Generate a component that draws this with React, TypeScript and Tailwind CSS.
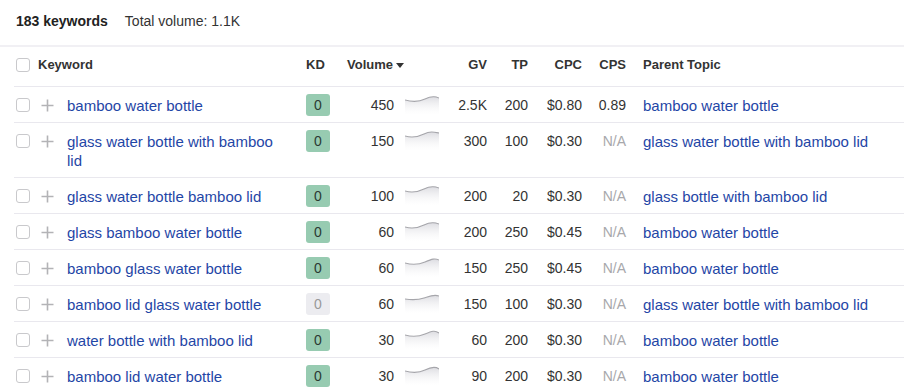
import React from 'react';

type Row = {
  keyword: string;
  kd: number;
  kdGray?: boolean;
  volume: string;
  gv: string;
  tp: string;
  cpc: string;
  cps: string;
  parent: string;
  spark: string;
};

const rows: Row[] = [
  { keyword: 'bamboo water bottle', kd: 0, volume: '450', gv: '2.5K', tp: '200', cpc: '$0.80', cps: '0.89', parent: 'bamboo water bottle', spark: 'M0 6 C7 8 14 8 20 5 S30 2 34 4' },
  { keyword: 'glass water bottle with bamboo lid', kd: 0, volume: '150', gv: '300', tp: '100', cpc: '$0.30', cps: 'N/A', parent: 'glass water bottle with bamboo lid', spark: 'M0 6 C7 8 13 7 19 4 S29 2 34 3' },
  { keyword: 'glass water bottle bamboo lid', kd: 0, volume: '100', gv: '200', tp: '20', cpc: '$0.30', cps: 'N/A', parent: 'glass bottle with bamboo lid', spark: 'M0 6 C7 8 13 7 19 4 S29 1 34 3' },
  { keyword: 'glass bamboo water bottle', kd: 0, volume: '60', gv: '200', tp: '250', cpc: '$0.45', cps: 'N/A', parent: 'bamboo water bottle', spark: 'M0 6 C7 8 13 7 19 4 S29 1 34 3' },
  { keyword: 'bamboo glass water bottle', kd: 0, volume: '60', gv: '150', tp: '250', cpc: '$0.45', cps: 'N/A', parent: 'bamboo water bottle', spark: 'M0 6 C7 8 13 8 20 5 S30 1 34 3' },
  { keyword: 'bamboo lid glass water bottle', kd: 0, kdGray: true, volume: '60', gv: '150', tp: '100', cpc: '$0.30', cps: 'N/A', parent: 'glass water bottle with bamboo lid', spark: 'M0 6 C7 7 13 7 19 5 S29 1 34 3' },
  { keyword: 'water bottle with bamboo lid', kd: 0, volume: '30', gv: '60', tp: '200', cpc: '$0.30', cps: 'N/A', parent: 'bamboo water bottle', spark: 'M0 6 C7 8 13 8 20 5 S30 1 34 4' },
  { keyword: 'bamboo lid water bottle', kd: 0, volume: '30', gv: '90', tp: '200', cpc: '$0.30', cps: 'N/A', parent: 'bamboo water bottle', spark: 'M0 6 C7 8 14 8 20 5 S30 1 34 4' },
];

const font = { fontFamily: '"Liberation Sans", Arial, sans-serif' };

const Checkbox = () => (
  <div className="w-[14px] h-[14px] rounded-[3px] border border-[#c9c9cc] bg-white shrink-0" />
);

const Sparkline: React.FC<{ d: string; id: number }> = ({ d, id }) => (
  <svg width="34" height="21" viewBox="0 0 34 21" className="block">
    <defs>
      <linearGradient id={`sg${id}`} x1="0" y1="0" x2="0" y2="1">
        <stop offset="0" stopColor="#dcdce1" stopOpacity="1" />
        <stop offset="1" stopColor="#ffffff" stopOpacity="0.2" />
      </linearGradient>
    </defs>
    <path d={`${d} L34 21 L0 21 Z`} fill={`url(#sg${id})`} transform="translate(0 1)" />
    <path d={d} fill="none" stroke="#a6a6ab" strokeWidth="1.1" transform="translate(0 1)" />
  </svg>
);

export default function App() {
  return (
    <div className="w-[904px] h-[392px] overflow-hidden bg-white text-[#333]" style={font}>
      {/* Summary */}
      <div className="h-[45px] flex items-center gap-[17px] pl-4 pb-[3px] text-[14px]">
        <span className="font-bold text-[#222]">183 keywords</span>
        <span className="text-[#333]">Total volume: 1.1K</span>
      </div>
      <div className="h-[2px] bg-[#f1f0f4]" />

      {/* Header */}
      <div className="ml-[14px] h-[40px] pb-[3px] border-b border-[#e9e8ee] flex items-center text-[13px] font-bold text-[#333]">
        <div className="pl-[2px] flex items-center">
          <Checkbox />
        </div>
        <div className="w-[8px]" />
        <div className="w-[268px]">Keyword</div>
        <div className="w-[41px]">KD</div>
        <div className="w-[92px] flex items-center gap-[3px]">
          Volume
          <svg width="8" height="5" viewBox="0 0 8 5"><path d="M0 0 H8 L4 5 Z" fill="#333" /></svg>
        </div>
        <div className="w-[48px] text-right">GV</div>
        <div className="w-[41px] text-right">TP</div>
        <div className="w-[54px] text-right">CPC</div>
        <div className="w-[44px] text-right">CPS</div>
        <div className="pl-[17px]">Parent Topic</div>
      </div>

      {/* Rows */}
      {rows.map((r, i) => (
        <div key={i} className="ml-[14px] border-b border-[#e9e8ee] flex items-start pt-[9px] pb-[7px] text-[14px] leading-[19px]">
          <div className="pl-[2px] pt-[2px] flex items-center">
            <Checkbox />
          </div>
          <div className="w-[11px]" />
          <div className="w-[13px] h-[19px] flex items-center justify-center">
            <svg width="13" height="13" viewBox="0 0 13 13">
              <path d="M6.5 0.5 V12.5 M0.5 6.5 H12.5" stroke="#b3b3b6" strokeWidth="1.6" />
            </svg>
          </div>
          <div className="w-[13px]" />
          <div className="w-[239px] pr-[22px] text-[15px] text-[#1f46a6]">{r.keyword}</div>
          <div className="w-[41px] h-[19px]">
            <div
              className={
                r.kdGray
                  ? 'w-[24px] h-[22px] -mt-[2px] rounded-[3px] bg-[#ececf0] text-[#999] flex items-center justify-center'
                  : 'w-[24px] h-[22px] -mt-[2px] rounded-[3px] bg-[#97cbb1] text-[#2b3a33] flex items-center justify-center'
              }
            >
              {r.kd}
            </div>
          </div>
          <div className="w-[47px] text-right">{r.volume}</div>
          <div className="w-[11px]" />
          <div className="w-[34px] h-[19px] -mt-[3px]">
            <Sparkline d={r.spark} id={i} />
          </div>
          <div className="w-[48px] text-right">{r.gv}</div>
          <div className="w-[41px] text-right">{r.tp}</div>
          <div className="w-[54px] text-right">{r.cpc}</div>
          <div className={r.cps === 'N/A' ? 'w-[44px] text-right text-[#a8a8ab]' : 'w-[44px] text-right'}>{r.cps}</div>
          <div className="pl-[17px] text-[15px] text-[#1f46a6] whitespace-nowrap">{r.parent}</div>
        </div>
      ))}
    </div>
  );
}
